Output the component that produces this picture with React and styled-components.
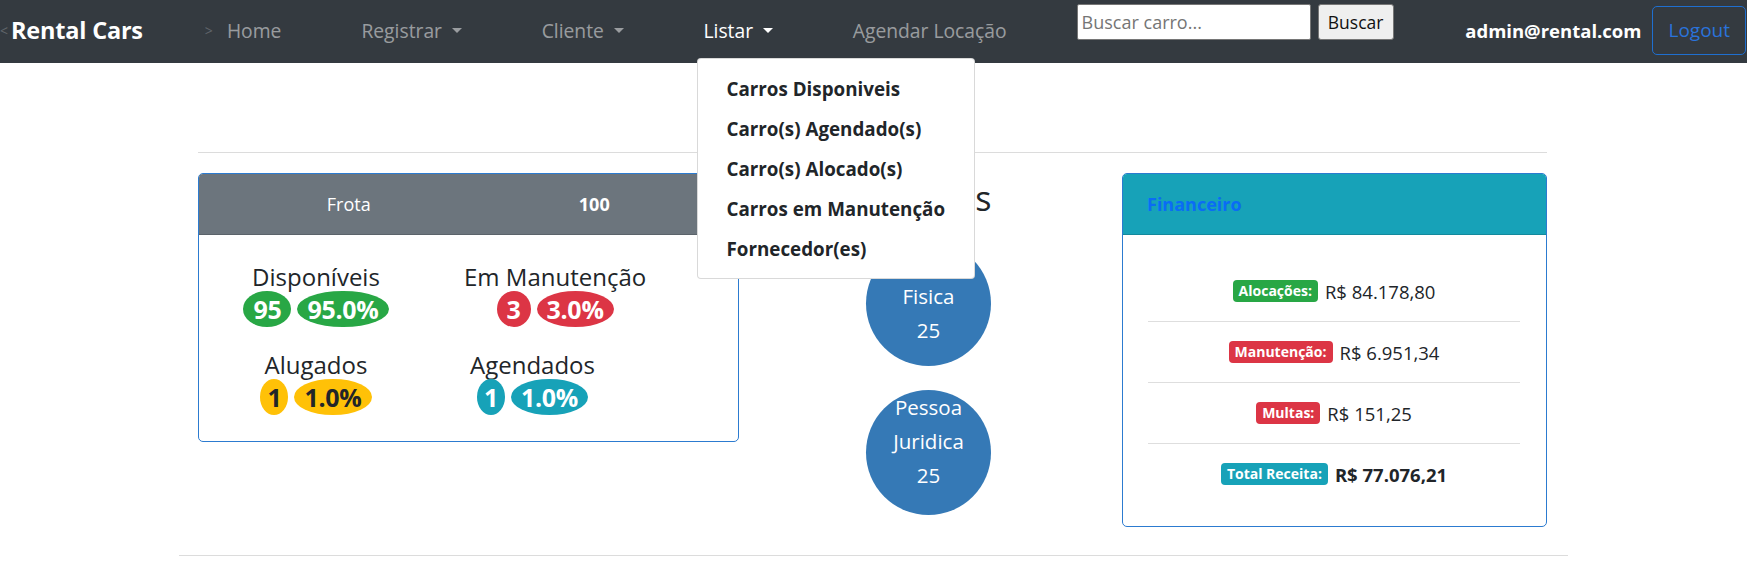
import React from "react";
import styled, { createGlobalStyle } from "styled-components";

const GlobalStyle = createGlobalStyle`
  * { box-sizing: border-box; }
  body {
    margin: 0;
    font-family: "Open Sans", "Noto Sans", sans-serif;
    color: #212529;
    background: #fff;
  }
`;

// ===== Navbar =====
const Navbar = styled.nav`
  position: relative;
  z-index: 10;
  display: flex;
  align-items: center;
  height: 63px;
  padding: 0 1px 3px 0;
  background: #343a40;
`;

const Arrow = styled.span`
  color: #60656b;
  font-size: 14px;
  margin-left: ${(props) => props.$ml || 0}px;
`;

const Brand = styled.a`
  margin-left: 3px;
  color: #fff;
  font-size: 23.5px;
  font-weight: 700;
  letter-spacing: -0.2px;
`;

const NavList = styled.ul`
  display: flex;
  align-items: center;
  gap: 80px;
  height: 100%;
  margin: 0 0 0 14px;
  padding: 0;
  list-style: none;
`;

const NavItem = styled.li`
  position: relative;
  display: flex;
  align-items: center;
  height: 100%;
  font-size: 19.3px;
  color: ${(props) => (props.$active ? "#fff" : "rgba(255, 255, 255, 0.5)")};
  cursor: pointer;
`;

const Caret = styled.span`
  display: inline-block;
  margin-left: 0.5em;
  border-top: 0.3em solid;
  border-left: 0.3em solid transparent;
  border-right: 0.3em solid transparent;
  vertical-align: 0.2em;
`;

const Dropdown = styled.div`
  position: absolute;
  top: 58px;
  left: -7px;
  width: 278px;
  padding: 10px 0 9px;
  background: #fff;
  border: 1px solid rgba(0, 0, 0, 0.15);
  border-radius: 4px;
`;

const DropItem = styled.div`
  height: 40px;
  line-height: 40px;
  padding-left: 29px;
  color: #212529;
  font-size: 18.8px;
  font-weight: 700;
  white-space: nowrap;
`;

const SearchForm = styled.form`
  display: flex;
  align-self: flex-start;
  margin: 4px 0 0 70px;
`;

const SearchInput = styled.input`
  width: 234px;
  height: 36px;
  padding: 0 4px;
  border: 1px solid #767676;
  border-radius: 2px;
  font-family: inherit;
  font-size: 18px;
  &::placeholder {
    color: #757575;
  }
`;

const SearchButton = styled.button`
  width: 76px;
  height: 36px;
  margin-left: 7px;
  padding: 0;
  background: #efefef;
  border: 1px solid #767676;
  border-radius: 3px;
  color: #111;
  font-family: inherit;
  font-size: 17.5px;
`;

const UserName = styled.span`
  margin-left: auto;
  color: #fff;
  font-size: 18.5px;
  font-weight: 700;
`;

const LogoutButton = styled.button`
  height: 49px;
  margin-left: 11px;
  padding: 0 15px;
  background: transparent;
  border: 1px solid #1f6fd0;
  border-radius: 5px;
  color: #2a73db;
  font-family: inherit;
  font-size: 19px;
`;

// ===== Page =====
const Page = styled.main`
  width: 1389px;
  margin: 0 auto;
`;

const Inner = styled.div`
  padding: 0 21px 0 19px;
`;

const Title = styled.h1`
  margin: 24px 0 0;
  text-align: center;
  font-size: 36px;
  font-weight: 500;
  line-height: 1.2;
`;

const Rule = styled.hr`
  margin: ${(props) => props.$margin || "0"};
  border: 0;
  border-top: 1px solid #dcdcdc;
`;

const Row = styled.div`
  display: grid;
  grid-template-columns: 541px 1fr 425px;
  align-items: start;
`;

const Card = styled.div`
  background: #fff;
  border: 1px solid #2c7bd0;
  border-radius: 5px;
  overflow: hidden;
`;

const CardHeader = styled.div`
  display: flex;
  align-items: center;
  height: 61px;
  background: ${(props) => props.$bg};
  border-bottom: 1px solid rgba(0, 0, 0, 0.15);
`;

const HeadRow = styled(CardHeader)`
  display: grid;
  grid-template-columns: 1fr 1fr;
`;

const HeadCell = styled.div`
  text-align: center;
  color: #fff;
  font-size: 18px;
  font-weight: ${(props) => (props.$bold ? 700 : 400)};
  &:first-child {
    padding-left: 30px;
  }
  &:last-child {
    padding-right: 18px;
  }
`;

const StatGrid = styled.div`
  display: grid;
  grid-template-columns: 234px 1fr;
  column-gap: 31px;
  row-gap: 23px;
  padding: 27px 0 26px;
`;

const Stat = styled.div`
  display: flex;
  flex-direction: column;
  align-items: center;
  justify-self: ${(props) => (props.$left ? "start" : "center")};
  margin-left: ${(props) => props.$ml || 0}px;
`;

const StatLabel = styled.div`
  font-size: 24px;
  line-height: 29px;
`;

const Pills = styled.div`
  display: flex;
  gap: 6px;
`;

const Pill = styled.span`
  height: 36px;
  padding: 0 ${(props) => (props.$narrow ? 7 : 10)}px;
  border-radius: 50%;
  background: ${(props) => props.$bg};
  color: ${(props) => props.$fg || "#fff"};
  font-size: 25px;
  font-weight: 700;
  line-height: 36px;
  letter-spacing: -0.3px;
`;

const Middle = styled.div`
  display: flex;
  flex-direction: column;
  align-items: center;
  gap: 24px;
  padding-right: 4px;
`;

const SubTitle = styled.h3`
  margin: 5px 0 -2px;
  font-size: 34px;
  font-weight: 500;
  line-height: 1.2;
`;

const Bubble = styled.div`
  width: 125px;
  height: 125px;
  padding-top: ${(props) => props.$top}px;
  border-radius: 50%;
  background: #3579b6;
  color: #fff;
  font-size: 20.5px;
  line-height: 34px;
  text-align: center;
`;

const FinTitle = styled.span`
  padding-left: 24px;
  color: #0a6cf5;
  font-size: 18px;
  font-weight: 700;
`;

const FinBody = styled.div`
  padding: 26px 26px 22px 25px;
`;

const FinRow = styled.div`
  display: flex;
  align-items: center;
  justify-content: center;
  gap: 7px;
  height: 60px;
  & + & {
    height: 61px;
    border-top: 1px solid #dedede;
  }
`;

const Tag = styled.span`
  padding: 2px 6px;
  border-radius: 4px;
  background: ${(props) => props.$bg};
  color: #fff;
  font-size: 14px;
  font-weight: 700;
  line-height: 18px;
`;

const Amount = styled.span`
  font-size: 18.5px;
  font-weight: ${(props) => (props.$bold ? 700 : 400)};
`;

const menu = [
  "Carros Disponiveis",
  "Carro(s) Agendado(s)",
  "Carro(s) Alocado(s)",
  "Carros em Manutenção",
  "Fornecedor(es)",
];

const stats = [
  { label: "Disponíveis", n: 95, bg: "#28a745" },
  { label: "Em Manutenção", n: 3, bg: "#dc3545", left: true },
  { label: "Alugados", n: 1, bg: "#ffc107", fg: "#212529" },
  { label: "Agendados", n: 1, bg: "#17a2b8", left: true, ml: 6 },
];

const finance = [
  { tag: "Alocações:", bg: "#28a745", value: "R$ 84.178,80" },
  { tag: "Manutenção:", bg: "#dc3545", value: "R$ 6.951,34" },
  { tag: "Multas:", bg: "#dc3545", value: "R$ 151,25" },
  { tag: "Total Receita:", bg: "#17a2b8", value: "R$ 77.076,21", bold: true },
];

export default function App() {
  const total = 100;
  return (
    <>
      <GlobalStyle />
      <Navbar>
        <Arrow>&lt;</Arrow>
        <Brand>Rental Cars</Brand>
        <Arrow $ml={62}>&gt;</Arrow>
        <NavList>
          <NavItem>Home</NavItem>
          <NavItem>
            Registrar<Caret />
          </NavItem>
          <NavItem>
            Cliente<Caret />
          </NavItem>
          <NavItem $active>
            Listar<Caret />
            <Dropdown>
              {menu.map((m) => (
                <DropItem key={m}>{m}</DropItem>
              ))}
            </Dropdown>
          </NavItem>
          <NavItem>Agendar Locação</NavItem>
        </NavList>
        <SearchForm onSubmit={(e) => e.preventDefault()}>
          <SearchInput placeholder="Buscar carro..." />
          <SearchButton>Buscar</SearchButton>
        </SearchForm>
        <UserName>admin@rental.com</UserName>
        <LogoutButton>Logout</LogoutButton>
      </Navbar>

      <Page>
        <Inner>
          <Title>Dashboard</Title>
          <Rule $margin="22px 0 20px" />
          <Row>
            {/* Frota */}
            <Card>
              <HeadRow $bg="#6c757d">
                <HeadCell>Frota</HeadCell>
                <HeadCell $bold>{total}</HeadCell>
              </HeadRow>
              <StatGrid>
                {stats.map((s) => (
                  <Stat key={s.label} $left={s.left} $ml={s.ml}>
                    <StatLabel>{s.label}</StatLabel>
                    <Pills>
                      <Pill $bg={s.bg} $fg={s.fg} $narrow={s.n === 1}>
                        {s.n}
                      </Pill>
                      <Pill $bg={s.bg} $fg={s.fg}>
                        {((s.n / total) * 100).toFixed(1)}%
                      </Pill>
                    </Pills>
                  </Stat>
                ))}
              </StatGrid>
            </Card>

            {/* Clientes */}
            <Middle>
              <SubTitle>Clientes</SubTitle>
              <Bubble $top={38}>
                Fisica
                <br />
                25
              </Bubble>
              <Bubble $top={0}>
                Pessoa
                <br />
                Juridica
                <br />
                25
              </Bubble>
            </Middle>

            {/* Financeiro */}
            <Card>
              <CardHeader $bg="#17a2b8">
                <FinTitle>Financeiro</FinTitle>
              </CardHeader>
              <FinBody>
                {finance.map((f) => (
                  <FinRow key={f.tag}>
                    <Tag $bg={f.bg}>{f.tag}</Tag>
                    <Amount $bold={f.bold}>{f.value}</Amount>
                  </FinRow>
                ))}
              </FinBody>
            </Card>
          </Row>
        </Inner>
        <Rule $margin="28px 0 0" />
      </Page>
    </>
  );
}
